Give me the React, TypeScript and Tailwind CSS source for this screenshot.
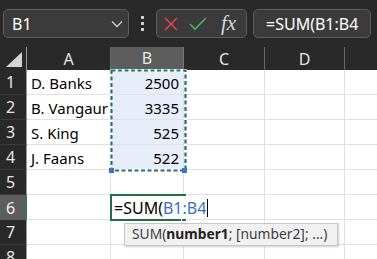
import React from "react";

const rows: { n: number; a: string; b: string }[] = [
  { n: 1, a: "D. Banks", b: "2500" },
  { n: 2, a: "B. Vangaur", b: "3335" },
  { n: 3, a: "S. King", b: "525" },
  { n: 4, a: "J. Faans", b: "522" },
  { n: 5, a: "", b: "" },
  { n: 6, a: "", b: "" },
  { n: 7, a: "", b: "" },
  { n: 8, a: "", b: "" },
];

export default function App() {
  return (
    <div
      className="relative w-[377px] h-[259px] overflow-hidden bg-[#292929]"
      style={{ fontFamily: '"Noto Sans", "Open Sans", sans-serif' }}
    >
      {/* Formula bar */}
      <div className="h-[47px] flex items-center pl-[3px]">
        <div className="w-[126px] h-[29px] rounded-[5px] border border-[#5e5e5e] bg-[#3b3b3b] flex items-center justify-between pl-[8px] pr-[5px]">
          <span className="text-[16px] text-white leading-none">B1</span>
          <svg width="12" height="8" viewBox="0 0 12 8">
            <polyline points="1,1.5 6,6.5 11,1.5" fill="none" stroke="#cfcfcf" strokeWidth="1.3" />
          </svg>
        </div>
        <div className="w-[27px] flex flex-col items-center gap-[3px]">
          <div className="w-[3px] h-[3px] bg-[#cfcfcf]" />
          <div className="w-[3px] h-[3px] bg-[#cfcfcf]" />
          <div className="w-[3px] h-[3px] bg-[#cfcfcf]" />
        </div>
        <div className="w-[91px] h-[29px] rounded-[5px] border border-[#5e5e5e] bg-[#3b3b3b] flex items-center pl-[7px]">
          <svg width="14" height="14" viewBox="0 0 14 14">
            <line x1="1" y1="1" x2="13" y2="13" stroke="#e0434f" strokeWidth="1.6" />
            <line x1="13" y1="1" x2="1" y2="13" stroke="#e0434f" strokeWidth="1.6" />
          </svg>
          <svg className="ml-[11px]" width="18" height="14" viewBox="0 0 18 14">
            <polyline points="1,7 6,12 17,1" fill="none" stroke="#4fb35a" strokeWidth="1.6" />
          </svg>
          <span
            className="ml-[14px] text-[21px] italic text-[#d6d6d6] leading-none"
            style={{ fontFamily: '"Liberation Serif", "DejaVu Serif", serif' }}
          >
            fx
          </span>
        </div>
        <div className="ml-[6px] w-[118px] h-[29px] rounded-[5px] border border-[#5e5e5e] bg-[#3b3b3b] flex items-center pl-[12px]">
          <span className="text-[16px] text-white leading-none whitespace-nowrap">=SUM(B1:B4</span>
        </div>
      </div>

      {/* Column headers */}
      <div className="flex h-[23px] text-[16px] text-[#e6e6e6]">
        <div className="w-[27px] relative border-r border-[#9a9a9a]">
          <svg className="absolute left-[6px] top-[5px]" width="17" height="16" viewBox="0 0 17 16">
            <polygon points="0,15 16,15 16,0" fill="#d4d4d4" />
          </svg>
        </div>
        <div className="w-[84px] flex items-center justify-center border-r border-[#666666]">A</div>
        <div className="w-[73px] flex items-center justify-center bg-[#5d5d5d] border-b-[2px] border-[#2e7a4e] border-r border-r-[#777777]">B</div>
        <div className="w-[81px] flex items-center justify-center border-r border-[#666666]">C</div>
        <div className="w-[80px] flex items-center justify-center border-r border-[#666666]">D</div>
        <div className="flex-1" />
      </div>

      {/* Grid rows */}
      <div className="bg-white">
        {rows.map((r) => (
          <div key={r.n} className="flex h-[25px] text-[15px] text-black">
            <div
              className={
                r.n === 6
                  ? "w-[27px] bg-[#5d5d5d] border-r-[2px] border-[#2e7a4e] text-[#f0f0f0] text-[16px] pl-[6px] flex items-center"
                  : "w-[27px] bg-[#292929] border-r border-[#9a9a9a] border-b border-b-[#3c3c3c] text-[#e6e6e6] text-[16px] pl-[6px] flex items-center"
              }
            >
              {r.n}
            </div>
            <div className="w-[84px] border-r border-b border-[#e1e1e1] pl-[4px] pt-[2px] flex items-center whitespace-nowrap overflow-hidden">
              {r.a}
            </div>
            <div
              className={
                r.n <= 4
                  ? "w-[73px] bg-[#e8eef9] border-r border-b border-[#e1e1e1] pr-[4px] pt-[2px] flex items-center justify-end whitespace-nowrap"
                  : "w-[73px] border-r border-b border-[#e1e1e1] pr-[4px] pt-[2px] flex items-center justify-end whitespace-nowrap"
              }
            >
              {r.b}
            </div>
            <div className="w-[81px] border-r border-b border-[#e1e1e1]" />
            <div className="w-[80px] border-r border-b border-[#e1e1e1]" />
            <div className="flex-1 border-b border-[#e1e1e1]" />
          </div>
        ))}
      </div>

      {/* Referenced range B1:B4 (marching ants) */}
      <svg className="absolute left-[110px] top-[69px]" width="77" height="103" viewBox="0 0 77 103">
        <rect x="1.5" y="1.5" width="74" height="100" fill="none" stroke="#ffffff" strokeWidth="3" />
        <rect x="1.5" y="1.5" width="74" height="100" fill="none" stroke="#2d6b7a" strokeWidth="2.2" strokeDasharray="4 2.5" />
      </svg>
      <div className="absolute left-[109px] top-[168px] w-[5px] h-[5px] bg-[#3b73c7]" />
      <div className="absolute left-[182px] top-[168px] w-[5px] h-[5px] bg-[#3b73c7]" />

      {/* Active cell B6 */}
      <div className="absolute left-[110px] top-[194px] w-[76px] h-[27px] border-2 border-[#226e45]" />
      <div className="absolute left-[181px] top-[216px] w-[6px] h-[6px] bg-[#226e45] border border-white" />
      <div className="absolute left-[112px] top-[196px] h-[23px] bg-white pl-[2px] pr-[1px] flex items-center pt-[1px] text-[16px] whitespace-nowrap">
        <span className="text-black">=SUM(</span>
        <span className="text-[#3a6fc4]">B1:B4</span>
        <span className="ml-[1px] w-[1px] h-[18px] bg-black" />
      </div>

      {/* Function tooltip */}
      <div className="absolute left-[124px] top-[223px] w-[214px] h-[23px] bg-[#f1f1f1] border border-[#c6c6c6] shadow-[1px_1px_2px_rgba(0,0,0,0.2)] flex items-center pl-[7px] text-[13.8px] text-[#3c3c3c] whitespace-nowrap">
        SUM(<span className="font-bold text-[#222]">number1</span>; [number2]; ...)
      </div>
    </div>
  );
}
